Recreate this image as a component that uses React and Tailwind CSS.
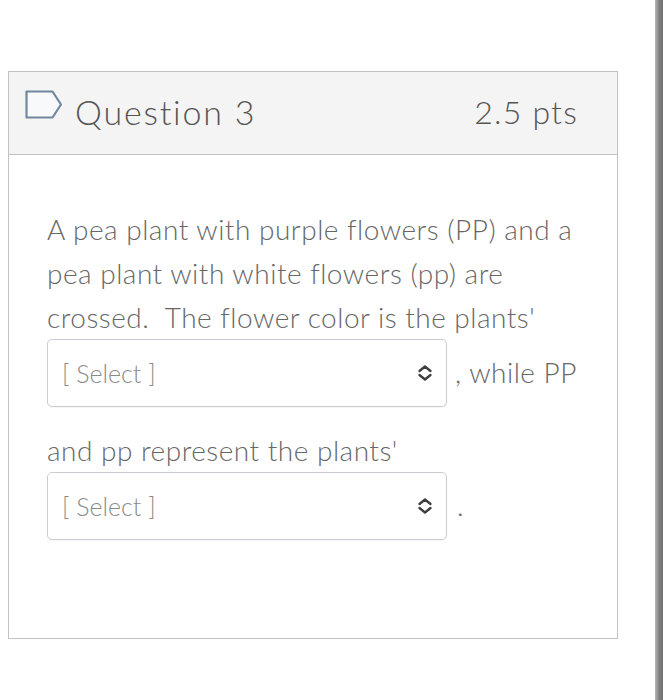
import React from "react";

const font = { fontFamily: "Lato, 'Noto Sans', sans-serif" };

const FlagIcon = () => (
  <svg width="38" height="29" viewBox="0 0 38 29" className="shrink-0 mb-[14px]">
    <path
      d="M1.5 1.5 H27.5 L36 14.5 L27.5 27.5 H1.5 Z"
      fill="#f7f9fb"
      stroke="#7186a0"
      strokeWidth="2.2"
      strokeLinejoin="round"
    />
  </svg>
);

const Chevrons = () => (
  <svg width="18" height="18" viewBox="0 0 18 18" className="shrink-0">
    <path d="M3.5 7 L9 2.5 L14.5 7" fill="none" stroke="#3d3d3d" strokeWidth="2.3" strokeLinecap="round" strokeLinejoin="round" />
    <path d="M3.5 11 L9 15.5 L14.5 11" fill="none" stroke="#3d3d3d" strokeWidth="2.3" strokeLinecap="round" strokeLinejoin="round" />
  </svg>
);

const SelectBox = () => (
  <span className="inline-flex items-center w-[400px] h-[68px] align-baseline border border-[#c9cdd1] rounded-[5px] bg-white pl-[14px] pr-[12px] mb-[21px] shadow-[0_1px_1px_rgba(0,0,0,0.04)]">
    <span className="flex-1 text-[25px] text-[#8a8a8a] leading-none tracking-normal">[ Select ]</span>
    <Chevrons />
  </span>
);

export default function App() {
  return (
    <div className="flex min-h-[700px] bg-white font-light" style={font}>
      <div className="flex-1 pt-[71px] pl-[8px]">
        <div className="w-[610px] h-[568px] border border-[#bfc3c6] flex flex-col">
          <div className="h-[83px] bg-[#f4f4f4] border-b border-[#bfc3c6] flex items-center pl-[16px] pr-[39px] pb-[3px]">
            <FlagIcon />
            <span className="ml-[12px] text-[34px] text-[#555] tracking-[1.8px]">Question 3</span>
            <span className="ml-auto text-[32px] text-[#555] tracking-[1.2px]">2.5 pts</span>
          </div>
          <div className="pt-[52px] pl-[38px] pr-[10px] text-[28px] leading-[44px] tracking-[0.5px] text-[#676767] whitespace-nowrap">
            A pea plant with purple flowers (PP) and a<br />
            pea plant with white flowers (pp) are<br />
            crossed.&nbsp; The flower color is the plants'<br />
            <SelectBox />
            <span className="ml-[8px]">, while PP</span>
            <br />
            and pp represent the plants'<br />
            <SelectBox />
            <span className="ml-[10px]">.</span>
          </div>
        </div>
      </div>
      <div className="w-[8px] bg-gradient-to-r from-[#b9b9b9] via-[#808080] to-[#6f6f6f]" />
    </div>
  );
}
